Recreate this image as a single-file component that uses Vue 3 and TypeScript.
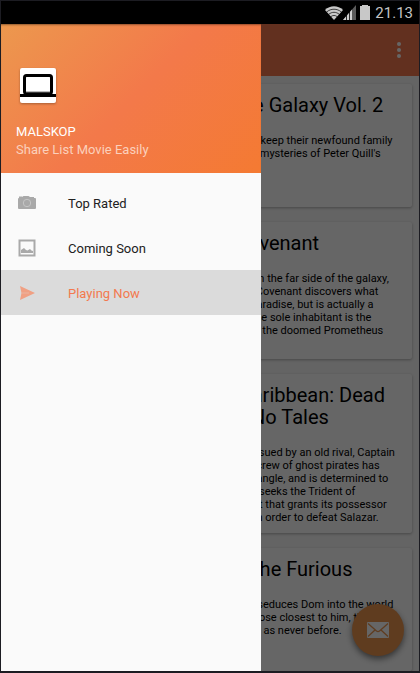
<script setup lang="ts">
import { ref } from 'vue'

interface Movie {
  title: string[]
  overview: string[]
}

interface MenuItem {
  id: string
  label: string
}

const movies: Movie[] = [
  {
    title: ['Guardians of the Galaxy Vol. 2'],
    overview: [
      'The Guardians must fight to keep their newfound family',
      "together as they unravel the mysteries of Peter Quill's",
      'true parentage.',
    ],
  },
  {
    title: ['Alien: Covenant'],
    overview: [
      'Bound for a remote planet on the far side of the galaxy,',
      'the crew of the colony ship Covenant discovers what',
      'they think is an uncharted paradise, but is actually a',
      'dark, dangerous world, whose sole inhabitant is the',
      '"synthetic" David, survivor of the doomed Prometheus',
      'expedition.',
    ],
  },
  {
    title: ['Pirates of the Caribbean: Dead', 'Men Tell No Tales'],
    overview: [
      'Captain Jack Sparrow is pursued by an old rival, Captain',
      'Salazar, who along with his crew of ghost pirates has',
      "escaped from the Devil's Triangle, and is determined to",
      'kill every pirate at sea. Jack seeks the Trident of',
      'Poseidon, a powerful artifact that grants its possessor',
      'total control over the seas, in order to defeat Salazar.',
    ],
  },
  {
    title: ['The Fate of the Furious'],
    overview: [
      'When a mysterious woman seduces Dom into the world',
      'of crime and a betrayal of those closest to him, the crew',
      'face trials that will test them as never before.',
    ],
  },
]

const menu: MenuItem[] = [
  { id: 'top', label: 'Top Rated' },
  { id: 'soon', label: 'Coming Soon' },
  { id: 'now', label: 'Playing Now' },
]

const selected = ref('now')
</script>

<template>
  <div class="device">
    <header class="status">
      <svg class="wifi" viewBox="0 0 18 14" aria-hidden="true">
        <path d="M0 4C5 -1 13 -1 18 4L9 14z" fill="#c8c8c8" />
        <path d="M1.600 6C6 2.300 12 2.300 16.400 6M3.600 8.400C7 5.600 11 5.600 14.400 8.400M5.600 10.800C7.800 9 10.200 9 12.400 10.800" fill="none" stroke="#000" stroke-width=".7" />
      </svg>
      <svg class="signal" viewBox="0 0 13 15" aria-hidden="true">
        <path d="M13 0v15H0z" fill="#5c5c5c" />
        <path d="M9 4.600V15H0z" fill="#d0d0d0" />
        <path d="M3.500 10v5M6.500 7v8" stroke="#000" stroke-width=".8" />
      </svg>
      <svg class="battery" viewBox="0 0 10 15" aria-hidden="true">
        <path d="M2 0h6v1h2v14H0V1h2z" fill="#c8c8c8" />
      </svg>
      <time>21.13</time>
    </header>

    <div class="screen">
      <div class="app">
        <div class="toolbar">
          <button class="more" type="button" aria-label="More options">
            <i></i><i></i><i></i>
          </button>
        </div>
        <main class="feed">
          <article v-for="movie in movies" :key="movie.title[0]" class="card">
            <div class="poster"></div>
            <div class="copy">
              <h2><span v-for="line in movie.title" :key="line">{{ line }}</span></h2>
              <p><span v-for="line in movie.overview" :key="line">{{ line }}</span></p>
            </div>
          </article>
        </main>
        <button class="fab" type="button" aria-label="Send mail">
          <svg viewBox="0 0 22 16" aria-hidden="true">
            <rect width="22" height="16" rx="1" fill="#fff" />
            <path d="M1 1.500L9.500 9Q11 10.200 12.500 9L21 1.500M1 14.500L8 8M21 14.500L14 8" fill="none" stroke="#ee964e" stroke-width="1.300" />
          </svg>
        </button>
      </div>

      <div class="scrim"></div>

      <aside class="drawer">
        <div class="profile">
          <svg class="logo" viewBox="0 0 36 36" aria-hidden="true">
            <rect width="36" height="35" rx="2" fill="#fff" />
            <rect x="4.500" y="7.500" width="27" height="18" rx="2" fill="none" stroke="#000" stroke-width="3" />
            <path d="M6 24h24" stroke="#777" stroke-width="1" />
            <path d="M0 26h36v3H0z" fill="#000" />
          </svg>
          <strong>MALSKOP</strong>
          <span>Share List Movie Easily</span>
        </div>
        <nav class="menu">
          <button
            v-for="item in menu"
            :key="item.id"
            type="button"
            :class="{ active: item.id === selected }"
            @click="selected = item.id"
          >
            <svg v-if="item.id === 'top'" viewBox="0 0 18 18" aria-hidden="true">
              <path d="M1 4V2.500h3V3l1.500-1h5l1.500 1h4v1h1a1 1 0 0 1 1 1v9a1 1 0 0 1-1 1H1a1 1 0 0 1-1-1V5a1 1 0 0 1 1-1z" fill="#a9a9a9" />
              <circle cx="9" cy="9" r="3.700" fill="none" stroke="#c6c6c6" stroke-width="1" />
            </svg>
            <svg v-else-if="item.id === 'soon'" viewBox="0 0 18 18" aria-hidden="true">
              <rect x="1.500" y="1.500" width="15" height="15" fill="#fafafa" stroke="#a9a9a9" stroke-width="2" />
              <path d="M3 14v-3l1.500-1L6 9l2 2 1.500.5L12 10l1.500 1.500L15 12v2z" fill="#a9a9a9" />
            </svg>
            <svg v-else viewBox="0 0 18 18" aria-hidden="true">
              <path d="M2 2L17 9 2 16 3.500 9z" fill="#f0a083" />
              <path d="M3.500 9H11" stroke="#ebb4a0" stroke-width="1" />
            </svg>
            {{ item.label }}
          </button>
        </nav>
      </aside>
    </div>
  </div>
</template>

<style>
body {
  margin: 0;
  background: #1c1c22;
}
</style>

<style scoped>
.device {
  box-sizing: border-box;
  display: flex;
  flex-direction: column;
  height: 100vh;
  padding: 1px 1px 2px;
  background: #1c1c22;
  font-family: Roboto, "Liberation Sans", sans-serif;
}

button {
  margin: 0;
  padding: 0;
  border: 0;
  background: none;
  font: inherit;
}

.status {
  display: flex;
  flex: none;
  align-items: center;
  justify-content: flex-end;
  height: 23px;
  padding-right: 6px;
  background: #000;
  color: #c4c4c4;
  font-size: 15px;
}

.status svg {
  flex: none;
}

.wifi {
  width: 18px;
  height: 14px;
}

.signal {
  width: 13px;
  height: 15px;
  margin-right: 4px;
}

.battery {
  width: 10px;
  height: 15px;
  margin-right: 5px;
}

.screen {
  position: relative;
  flex: 1;
  min-height: 0;
  overflow: hidden;
}

.app {
  display: flex;
  flex-direction: column;
  height: 100%;
  background: #fafafa;
}

.toolbar {
  display: flex;
  flex: none;
  align-items: center;
  justify-content: flex-end;
  height: 52px;
  padding-right: 14px;
  background: #f5784e;
}

.more {
  display: grid;
  gap: 2px;
  padding: 4px;
}

.more i {
  width: 4px;
  height: 4px;
  border-radius: 50%;
  background: #fff;
}

.feed {
  display: flex;
  flex: 1;
  flex-direction: column;
  gap: 15px;
  min-height: 0;
  padding: 8px 7px;
  overflow: hidden;
}

.card {
  box-sizing: border-box;
  display: flex;
  flex: none;
  min-height: 123px;
  border-radius: 2px;
  background: #fff;
  box-shadow: 0 1px 3px rgba(0, 0, 0, 0.3);
}

.poster {
  flex: none;
  width: 80px;
  background: #b8b8b8;
}

.copy {
  flex: 1;
  padding: 10px 0 9px;
  white-space: nowrap;
}

.copy h2 {
  margin: 0 0 18px;
  font-size: 20px;
  font-weight: 400;
  line-height: 22px;
  text-align: center;
}

.copy p {
  margin: 0;
  padding-left: 34px;
  font-size: 11px;
  line-height: 13px;
}

.copy span {
  display: block;
}

.fab {
  position: absolute;
  right: 15px;
  bottom: 15px;
  display: grid;
  place-items: center;
  width: 52px;
  height: 52px;
  border-radius: 50%;
  background: #ee964e;
  box-shadow: 0 3px 6px rgba(0, 0, 0, 0.5);
}

.fab svg {
  width: 22px;
  height: 16px;
}

.scrim {
  position: absolute;
  inset: 0;
  background: rgba(0, 0, 0, 0.6);
}

.drawer {
  position: absolute;
  top: 0;
  bottom: 0;
  left: 0;
  width: 260px;
  background: #fafafa;
}

.profile {
  box-sizing: border-box;
  display: flex;
  flex-direction: column;
  justify-content: flex-end;
  height: 149px;
  padding: 0 15px 14px;
  background: linear-gradient(135deg, #ec984e 0%, #f3794a 50%, #f47a32 100%);
  box-shadow: inset 0 2px 2px -1px rgba(0, 0, 0, 0.4);
  color: #fff;
  font-size: 13px;
  line-height: 18px;
}

.profile strong {
  font-weight: 400;
}

.profile span {
  color: #fbd0bc;
}

.logo {
  width: 36px;
  height: 36px;
  margin: 0 4px 19px;
  filter: drop-shadow(0 1px 1px rgba(0, 0, 0, 0.3));
}

.menu {
  display: flex;
  flex-direction: column;
  padding: 7px 0;
}

.menu button {
  display: flex;
  align-items: center;
  gap: 32px;
  height: 45px;
  padding: 1px 17px 0;
  color: #212121;
  font-size: 13px;
  text-align: left;
}

.menu .active {
  background: #dbdbdb;
  color: #f3794e;
}

.menu svg {
  width: 18px;
  height: 18px;
}
</style>
